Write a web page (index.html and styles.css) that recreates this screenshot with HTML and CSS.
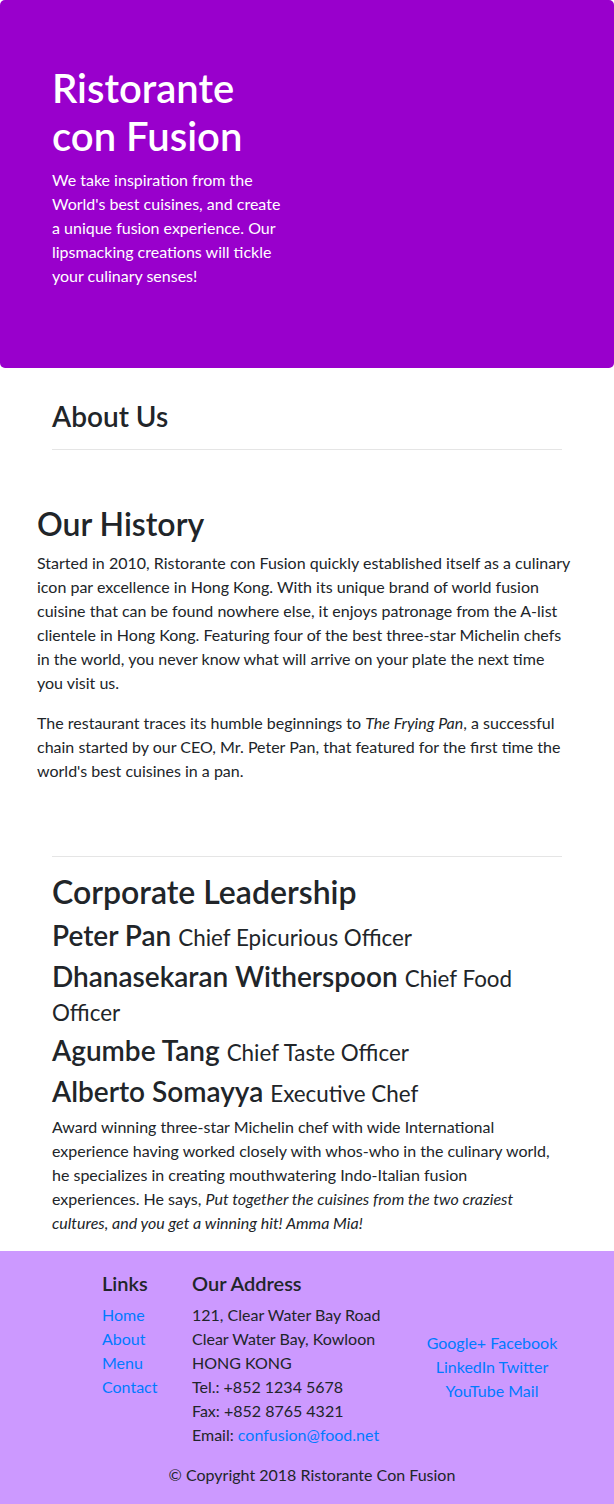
FILE: index.html
```html
<!DOCTYPE html>
<html lang="en">
<head>
<meta charset="utf-8">
<title>Ristorante con Fusion: About Us</title>
<link rel="stylesheet" href="styles.css">
</head>
<body>
<header class="jumbotron">
  <div class="container">
    <div class="row">
      <div class="col-half">
        <h1>Ristorante con Fusion</h1>
        <p>We take inspiration from the World's best cuisines, and create a unique fusion experience. Our lipsmacking creations will tickle your culinary senses!</p>
      </div>
    </div>
  </div>
</header>

<main class="container">
  <section class="about">
    <h3>About Us</h3>
    <hr>
  </section>

  <section class="history">
    <h2>Our History</h2>
    <p>Started in 2010, Ristorante con Fusion quickly established itself as a culinary icon par excellence in Hong Kong. With its unique brand of world fusion cuisine that can be found nowhere else, it enjoys patronage from the A-list clientele in Hong Kong. Featuring four of the best three-star Michelin chefs in the world, you never know what will arrive on your plate the next time you visit us.</p>
    <p>The restaurant traces its humble beginnings to <em>The Frying Pan</em>, a successful chain started by our CEO, Mr. Peter Pan, that featured for the first time the world's best cuisines in a pan.</p>
  </section>

  <section class="leadership">
    <hr>
    <h2>Corporate Leadership</h2>
    <h3>Peter Pan <small>Chief Epicurious Officer</small></h3>
    <h3>Dhanasekaran Witherspoon <small>Chief Food Officer</small></h3>
    <h3>Agumbe Tang <small>Chief Taste Officer</small></h3>
    <h3>Alberto Somayya <small>Executive Chef</small></h3>
    <p class="bio">Award winning three-star Michelin chef with wide International experience having worked closely with whos-who in the culinary world, he specializes in creating mouthwatering Indo-Italian fusion experiences. He says, <em>Put together the cuisines from the two craziest cultures, and you get a winning hit! Amma Mia!</em></p>
  </section>
</main>

<footer class="footer">
  <div class="container">
    <div class="row">
      <div class="col-links">
        <h5>Links</h5>
        <ul class="list-unstyled">
          <li><a href="#">Home</a></li>
          <li><a href="#">About</a></li>
          <li><a href="#">Menu</a></li>
          <li><a href="#">Contact</a></li>
        </ul>
      </div>
      <div class="col-address">
        <h5>Our Address</h5>
        <address>
          121, Clear Water Bay Road<br>
          Clear Water Bay, Kowloon<br>
          HONG KONG<br>
          Tel.: +852 1234 5678<br>
          Fax: +852 8765 4321<br>
          Email: <a href="#">confusion@food.net</a>
        </address>
      </div>
      <div class="col-social">
        <div><a href="#">Google+</a> <a href="#">Facebook</a></div>
        <div><a href="#">LinkedIn</a> <a href="#">Twitter</a></div>
        <div><a href="#">YouTube</a> <a href="#">Mail</a></div>
      </div>
    </div>
    <div class="row row-center">
      <p class="copyright">© Copyright 2018 Ristorante Con Fusion</p>
    </div>
  </div>
</footer>
</body>
</html>
```
FILE: styles.css
```css
*, *::before, *::after { box-sizing: border-box; }

body {
  margin: 0;
  font-family: "Lato", "Open Sans", sans-serif;
  font-size: 16px;
  line-height: 1.5;
  color: #212529;
  background: #fff;
}

h1, h2, h3, h5 {
  margin: 0 0 8px;
  font-weight: 600;
  line-height: 1.2;
}
h1 { font-size: 40px; }
h2 { font-size: 32px; }
h3 { font-size: 28px; }
h5 { font-size: 20px; }

p { margin: 0 0 16px; }

small {
  font-size: 80%;
  font-weight: 400;
}

a {
  color: #007bff;
  text-decoration: none;
}

hr {
  border: 0;
  border-top: 1px solid rgba(0, 0, 0, 0.1);
  height: 0;
}

.container {
  width: 100%;
  max-width: 540px;
  margin: 0 auto;
  padding: 0 15px;
}

.row {
  display: flex;
  flex-wrap: wrap;
  margin: 0 -15px;
}

/* Hero */
.jumbotron {
  background: #9900cc;
  color: #fff;
  padding: 64px 32px;
  margin-bottom: 32px;
  border-radius: 5px;
}
.col-half {
  width: 50%;
  padding: 0 15px;
}

/* About */
.about hr { margin: 15px 0 0; }

/* History */
.history {
  margin: 0 -10px 0 -15px;
  padding: 55px 0 57px;
}

/* Leadership */
.leadership hr { margin: 0 0 16px; }
.leadership h3 { margin-bottom: 7px; }
.bio { padding-right: 8px; }

/* Footer */
.footer {
  background: #cc99ff;
  padding: 20px 0;
}
.footer .container {
  padding: 0 10px 0 20px;
}
.col-links {
  width: 16.6667%;
  margin-left: 8.3333%;
  padding: 0 15px;
}
.col-address {
  width: 41.6667%;
  padding: 0 15px;
}
.col-social {
  width: 33.3333%;
  padding: 0 15px;
  align-self: center;
  text-align: center;
}
.list-unstyled {
  list-style: none;
  margin: 0 0 16px;
  padding: 0;
}
address {
  font-style: normal;
  margin: 0 0 16px;
}
.row-center { justify-content: center; }
.copyright { margin: 0 0 16px; }
```
